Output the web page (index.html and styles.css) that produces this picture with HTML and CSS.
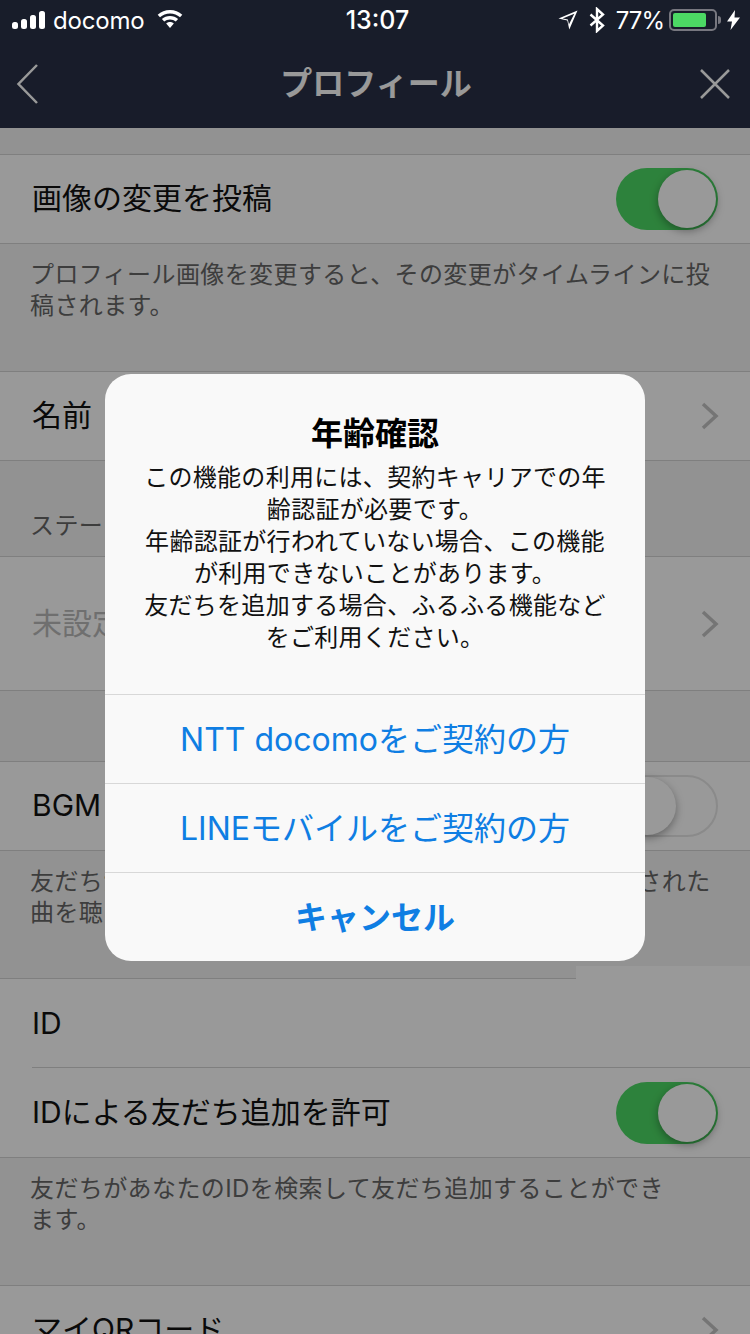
FILE: index.html
```html
<!DOCTYPE html>
<html lang="ja">
  <head>
    <meta charset="UTF-8" />
    <meta name="viewport" content="width=device-width, initial-scale=1.0" />
    <title>プロフィール</title>
    <link rel="stylesheet" href="styles.css">
  </head>
  <body>
    <div class="page">
      <div class="status-bar">
        <div class="status-left">
          <svg class="signal" width="36" height="18" viewBox="0 0 36 18">
            <rect x="0" y="11" width="6" height="7" rx="2.5" />
            <rect x="9" y="8" width="6" height="10" rx="2.5" />
            <rect x="18" y="4" width="6" height="14" rx="2.5" />
            <rect x="27" y="0" width="6" height="18" rx="2.5" />
          </svg>
          <span class="carrier">docomo</span>
          <svg class="wifi" width="28" height="20" viewBox="0 0 28 20">
            <path d="M14 3.4c3.8 0 7.300 1.400 10 3.800l2.300-2.500C23 1.800 18.700 0 14 0S5 1.800 1.700 4.700L4 7.200c2.700-2.400 6.200-3.800 10-3.800z" />
            <path d="M14 9.400c2.200 0 4.200.8 5.800 2.200l2.300-2.500C20 7.100 17.100 6 14 6s-6 1.100-8.100 3.100l2.300 2.500c1.600-1.400 3.600-2.200 5.800-2.200z" />
            <path d="M14 12c-1.500 0-2.800.5-3.800 1.500L14 18l3.800-4.500c-1-1-2.300-1.500-3.800-1.500z" />
          </svg>
        </div>
        <div class="status-time">13:07</div>
        <div class="status-right">
          <svg class="arrow" width="20" height="20" viewBox="0 0 20 20">
            <path d="M19.500.5 .5 8.500l8.800 1.900 2 9.100zM16.300 3.700l-5.400 10.900-1-5.100-5.300-1.100z" fill-rule="evenodd" />
          </svg>
          <svg class="bluetooth" width="16" height="26" viewBox="0 0 16 26">
            <path d="M1.500 7.500 14 18.500 8 24V2l6 5.500L1.500 18.500" fill="none" stroke="#fff" stroke-width="2.400" />
          </svg>
          <span class="percent">77%</span>
          <div class="battery"><div class="battery-level"></div></div>
          <div class="battery-tip"></div>
          <svg class="bolt" width="13" height="20" viewBox="0 0 13 20">
            <path d="M8 0 0 11.500h5L3.500 20 13 7.500H7.500z" />
          </svg>
        </div>
      </div>

      <div class="nav-bar">
        <svg class="nav-icon" width="24" height="42" viewBox="0 0 24 42">
          <path d="M21 2 2.500 21 21 40" />
        </svg>
        <div class="nav-title">プロフィール</div>
        <svg class="nav-icon" width="32" height="32" viewBox="0 0 32 32">
          <path d="M2 2 30 30M30 2 2 30" />
        </svg>
      </div>

      <div class="list">
        <div class="gap gap-top"></div>
        <div class="row">
          <span>画像の変更を投稿</span>
          <div class="toggle on"><div class="knob"></div></div>
        </div>
        <div class="note">プロフィール画像を変更すると、その変更がタイムラインに投稿されます。</div>
        <div class="row">
          <span>名前</span>
          <svg class="chevron" width="18" height="28" viewBox="0 0 18 28"><path d="M2 2 15 14 2 26" /></svg>
        </div>
        <div class="note note-label">ステータスメッセージ</div>
        <div class="row row-tall">
          <span class="placeholder">未設定</span>
          <svg class="chevron" width="18" height="28" viewBox="0 0 18 28"><path d="M2 2 15 14 2 26" /></svg>
        </div>
        <div class="gap gap-mid"></div>
        <div class="row">
          <span>BGM</span>
          <div class="toggle"><div class="knob"></div></div>
        </div>
        <div class="note">友だちがあなたのプロフィールにアクセスすると、設定された曲を聴くことができます。</div>
        <div class="row row-inset">
          <span>ID</span>
        </div>
        <div class="row row-last">
          <span>IDによる友だち追加を許可</span>
          <div class="toggle on"><div class="knob"></div></div>
        </div>
        <div class="note">友だちがあなたのIDを検索して友だち追加することができ<br>ます。</div>
        <div class="row">
          <span>マイQRコード</span>
          <svg class="chevron" width="18" height="28" viewBox="0 0 18 28"><path d="M2 2 15 14 2 26" /></svg>
        </div>
      </div>

      <div class="seam"></div>

      <div class="overlay">
        <div class="dialog">
          <div class="dialog-body">
            <div class="dialog-title">年齢確認</div>
            <div class="dialog-text">
              この機能の利用には、契約キャリアでの年<br>
              齢認証が必要です。<br>
              年齢認証が行われていない場合、この機能<br>
              が利用できないことがあります。<br>
              友だちを追加する場合、ふるふる機能など<br>
              をご利用ください。
            </div>
          </div>
          <div class="dialog-button">NTT docomoをご契約の方</div>
          <div class="dialog-button">LINEモバイルをご契約の方</div>
          <div class="dialog-button cancel">キャンセル</div>
        </div>
      </div>
    </div>
  </body>
</html>
```

FILE: styles.css
```css
* {
  box-sizing: border-box;
}
body {
  margin: 0;
  background-color: #f3f3f3;
  font-family: Inter, "Noto Sans CJK JP", sans-serif;
}
.page {
  position: relative;
  width: 750px;
  height: 1334px;
  overflow: hidden;
}

/* Status bar */
.status-bar {
  position: relative;
  z-index: 3;
  display: flex;
  justify-content: space-between;
  align-items: center;
  height: 40px;
  padding: 0 10px 0 12px;
  background-color: #181d2a;
  color: #fff;
  font-family: Inter, "Liberation Sans", sans-serif;
  font-size: 24px;
}
.status-bar svg {
  fill: #fff;
  flex: none;
}
.status-left,
.status-right {
  display: flex;
  align-items: center;
  width: 300px;
}
.status-right {
  justify-content: flex-end;
}
.carrier {
  margin-left: 5px;
  letter-spacing: -0.2px;
}
.wifi {
  margin-left: 12px;
}
.status-time {
  margin-left: 3px;
  font-size: 25px;
  font-weight: 500;
}
.bluetooth {
  margin-left: 11px;
}
.percent {
  margin-left: 11px;
  letter-spacing: -1px;
}
.battery {
  width: 48px;
  height: 22px;
  margin-left: 5px;
  padding: 2px;
  border: 2px solid #77777f;
  border-radius: 5px;
}
.battery-level {
  width: 33px;
  height: 14px;
  border-radius: 2px;
  background-color: #4cd964;
}
.battery-tip {
  width: 3px;
  height: 8px;
  margin-left: 1px;
  border-radius: 0 3px 3px 0;
  background-color: #77777f;
}
.bolt {
  margin-left: 6px;
}

/* Nav */
.nav-bar {
  display: flex;
  justify-content: space-between;
  align-items: center;
  height: 88px;
  padding: 0 19px 0 16px;
  background-color: #283046;
}
.nav-icon path {
  fill: none;
  stroke: #fff;
  stroke-width: 2.500;
}
.nav-title {
  margin-left: 13px;
  color: #fff;
  font-size: 32px;
  font-weight: 700;
  line-height: 44px;
}

/* List */
.gap {
  border-bottom: 1px solid #d4d4d4;
}
.gap-top {
  height: 27px;
}
.gap-mid {
  height: 71px;
}
.row {
  position: relative;
  display: flex;
  justify-content: space-between;
  align-items: center;
  height: 89px;
  padding: 0 32px;
  border-bottom: 1px solid #d4d4d4;
  background-color: #fff;
  color: #111;
  font-size: 30px;
  line-height: 40px;
}
.row > span {
  margin-bottom: 2px;
}
.row-tall {
  height: 134px;
}
.row-last {
  height: 90px;
}
.row-inset {
  border-bottom: none;
}
.row-inset::after {
  content: "";
  position: absolute;
  right: 0;
  bottom: 0;
  left: 32px;
  height: 1px;
  background-color: #d4d4d4;
}
.placeholder {
  color: #b9b9b9;
}
.note {
  height: 128px;
  padding: 15px 30px 0 30px;
  border-bottom: 1px solid #d4d4d4;
  color: #666;
  font-size: 24px;
  line-height: 31px;
  letter-spacing: 0.4px;
}
.note-label {
  height: 96px;
  padding-top: 49px;
}
.chevron {
  margin-right: -1px;
}
.chevron path {
  fill: none;
  stroke: #c4c4c4;
  stroke-width: 3.500;
}

/* Toggles */
.toggle {
  position: relative;
  width: 102px;
  height: 62px;
  border: 2px solid #e6e6e6;
  border-radius: 31px;
  background-color: #fff;
}
.toggle.on {
  border: none;
  background-color: #4cd964;
}
.knob {
  position: absolute;
  top: 0;
  left: 0;
  width: 58px;
  height: 58px;
  border-radius: 50%;
  background-color: #fff;
  box-shadow: 0 3px 8px rgba(0, 0, 0, 0.35);
}
.toggle.on .knob {
  top: 2px;
  left: 42px;
}

/* Band under the dialog where the rows are cut off */
.seam {
  position: absolute;
  top: 966px;
  right: 0;
  width: 174px;
  height: 14px;
  background-color: #fff;
}

/* Dialog */
.overlay {
  position: absolute;
  top: 0;
  right: 0;
  bottom: 0;
  left: 0;
  z-index: 2;
  display: flex;
  justify-content: center;
  align-items: center;
  background: rgba(0, 0, 0, 0.4);
}
.dialog {
  width: 540px;
  border-radius: 26px;
  background-color: #f9f9f9;
  overflow: hidden;
  text-align: center;
}
.dialog-body {
  height: 320px;
  padding-top: 40px;
}
.dialog-title {
  color: #000;
  font-size: 32px;
  font-weight: 700;
  line-height: 40px;
}
.dialog-text {
  margin-top: 8px;
  color: #111;
  font-size: 24px;
  line-height: 32px;
  letter-spacing: 0.3px;
}
.dialog-button {
  display: flex;
  justify-content: center;
  align-items: center;
  height: 89px;
  padding-top: 2px;
  border-top: 1px solid #d8d8d8;
  color: #0f7ee3;
  font-size: 32px;
  line-height: 44px;
}
.dialog-button.cancel {
  font-weight: 700;
}
```
